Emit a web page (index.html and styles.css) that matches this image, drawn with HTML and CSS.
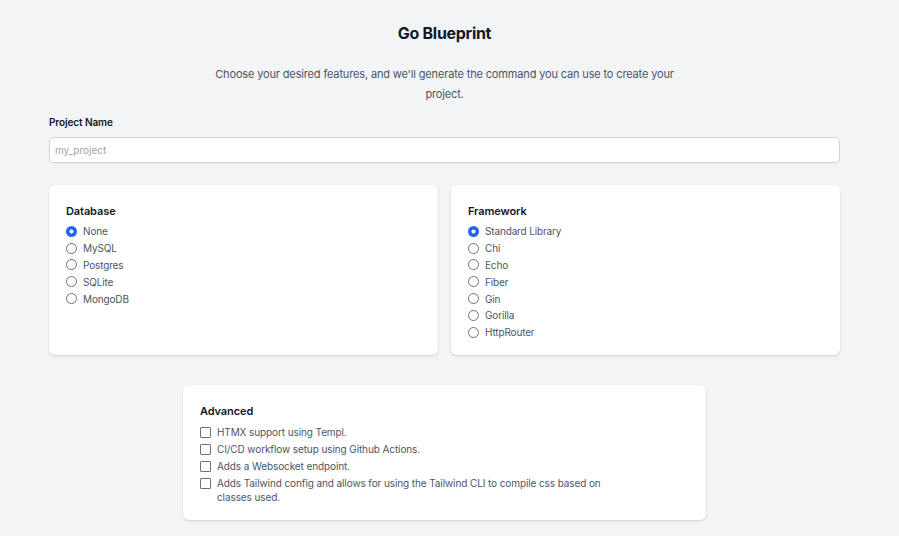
FILE: index.html
```html
<!DOCTYPE html>
<html lang="en">
<head>
<meta charset="utf-8">
<title>Go Blueprint</title>
<link rel="stylesheet" href="styles.css">
</head>
<body>
<main class="container">
  <h1 class="title">Go Blueprint</h1>
  <p class="intro">Choose your desired features, and we'll generate the command you can use to create your project.</p>

  <label class="field-label" for="name">Project Name</label>
  <input class="text-input" id="name" type="text" placeholder="my_project">

  <div class="grid">
    <section class="card">
      <h2 class="card-title">Database</h2>
      <label class="option"><input type="radio" name="db" checked><span>None</span></label>
      <label class="option"><input type="radio" name="db"><span>MySQL</span></label>
      <label class="option"><input type="radio" name="db"><span>Postgres</span></label>
      <label class="option"><input type="radio" name="db"><span>SQLite</span></label>
      <label class="option"><input type="radio" name="db"><span>MongoDB</span></label>
    </section>
    <section class="card">
      <h2 class="card-title">Framework</h2>
      <label class="option"><input type="radio" name="fw" checked><span>Standard Library</span></label>
      <label class="option"><input type="radio" name="fw"><span>Chi</span></label>
      <label class="option"><input type="radio" name="fw"><span>Echo</span></label>
      <label class="option"><input type="radio" name="fw"><span>Fiber</span></label>
      <label class="option"><input type="radio" name="fw"><span>Gin</span></label>
      <label class="option"><input type="radio" name="fw"><span>Gorilla</span></label>
      <label class="option"><input type="radio" name="fw"><span>HttpRouter</span></label>
    </section>
  </div>

  <section class="card card-advanced">
    <h2 class="card-title">Advanced</h2>
    <label class="check"><input type="checkbox"><span>HTMX support using Templ.</span></label>
    <label class="check"><input type="checkbox"><span>CI/CD workflow setup using Github Actions.</span></label>
    <label class="check"><input type="checkbox"><span>Adds a Websocket endpoint.</span></label>
    <label class="check"><input type="checkbox"><span>Adds Tailwind config and allows for using the Tailwind CLI to compile css based on classes used.</span></label>
  </section>
</main>
</body>
</html>
```

FILE: styles.css
```css
* { box-sizing: border-box; }
html, body { margin: 0; padding: 0; }
body {
  background: #f3f4f6;
  font-family: Inter, "Noto Sans", "Liberation Sans", sans-serif;
  color: #4b5563;
  min-height: 536px;
  overflow: hidden;
}
.container {
  width: 791px;
  margin-left: 49px;
  padding-top: 22px;
  display: flex;
  flex-direction: column;
}
.title {
  margin: 0;
  text-align: center;
  font-size: 16px;
  line-height: 22px;
  font-weight: 700;
  color: #111827;
  letter-spacing: -0.3px;
}
.intro {
  margin: 20px auto 0;
  width: 480px;
  text-align: center;
  font-size: 11px;
  line-height: 20px;
  letter-spacing: -0.15px;
  color: #4b5563;
}
.field-label {
  margin-top: 11px;
  font-size: 10px;
  line-height: 14px;
  font-weight: 600;
  letter-spacing: -0.1px;
  color: #111827;
}
.text-input {
  margin-top: 8px;
  height: 26px;
  border: 1px solid #d1d5db;
  border-radius: 5px;
  background: #fff;
  padding: 0 5px;
  font: inherit;
  font-size: 10px;
  color: #111827;
  box-shadow: 0 1px 2px rgba(0,0,0,0.05);
}
.text-input::placeholder { color: #9ca3af; }
.grid {
  margin-top: 22px;
  display: grid;
  grid-template-columns: 1fr 1fr;
  gap: 13px;
}
.card {
  background: #fff;
  border-radius: 6px;
  box-shadow: 0 1px 3px rgba(0,0,0,0.1), 0 1px 2px rgba(0,0,0,0.06);
  padding: 17px 17px 14px;
  display: flex;
  flex-direction: column;
  min-height: 170px;
}
.card-title {
  margin: 0 0 3px;
  font-size: 11px;
  line-height: 18px;
  font-weight: 600;
  letter-spacing: -0.1px;
  color: #111827;
}
.option {
  display: flex;
  align-items: center;
  gap: 6px;
  height: 16.8px;
  font-size: 10px;
  letter-spacing: -0.15px;
  color: #4b5563;
}
.option input {
  appearance: none;
  -webkit-appearance: none;
  margin: 0;
  width: 11px;
  height: 11px;
  border: 1px solid #6b7280;
  border-radius: 50%;
  background: #fff;
  flex: none;
}
.option input:checked {
  border: none;
  background: radial-gradient(circle, #fff 0 1.8px, #2563eb 2.3px);
}
.card-advanced {
  width: 523px;
  margin: 30px auto 0;
  min-height: 134px;
  padding-bottom: 15px;
}
.check {
  display: flex;
  align-items: flex-start;
  gap: 6px;
  font-size: 10px;
  line-height: 14px;
  letter-spacing: -0.1px;
  padding: 1.5px 0;
  color: #4b5563;
  max-width: 405px;
}
.check input {
  appearance: none;
  -webkit-appearance: none;
  margin: 2px 0 0;
  width: 11px;
  height: 11px;
  border: 1px solid #6b7280;
  border-radius: 1px;
  background: #fff;
  flex: none;
}
```
